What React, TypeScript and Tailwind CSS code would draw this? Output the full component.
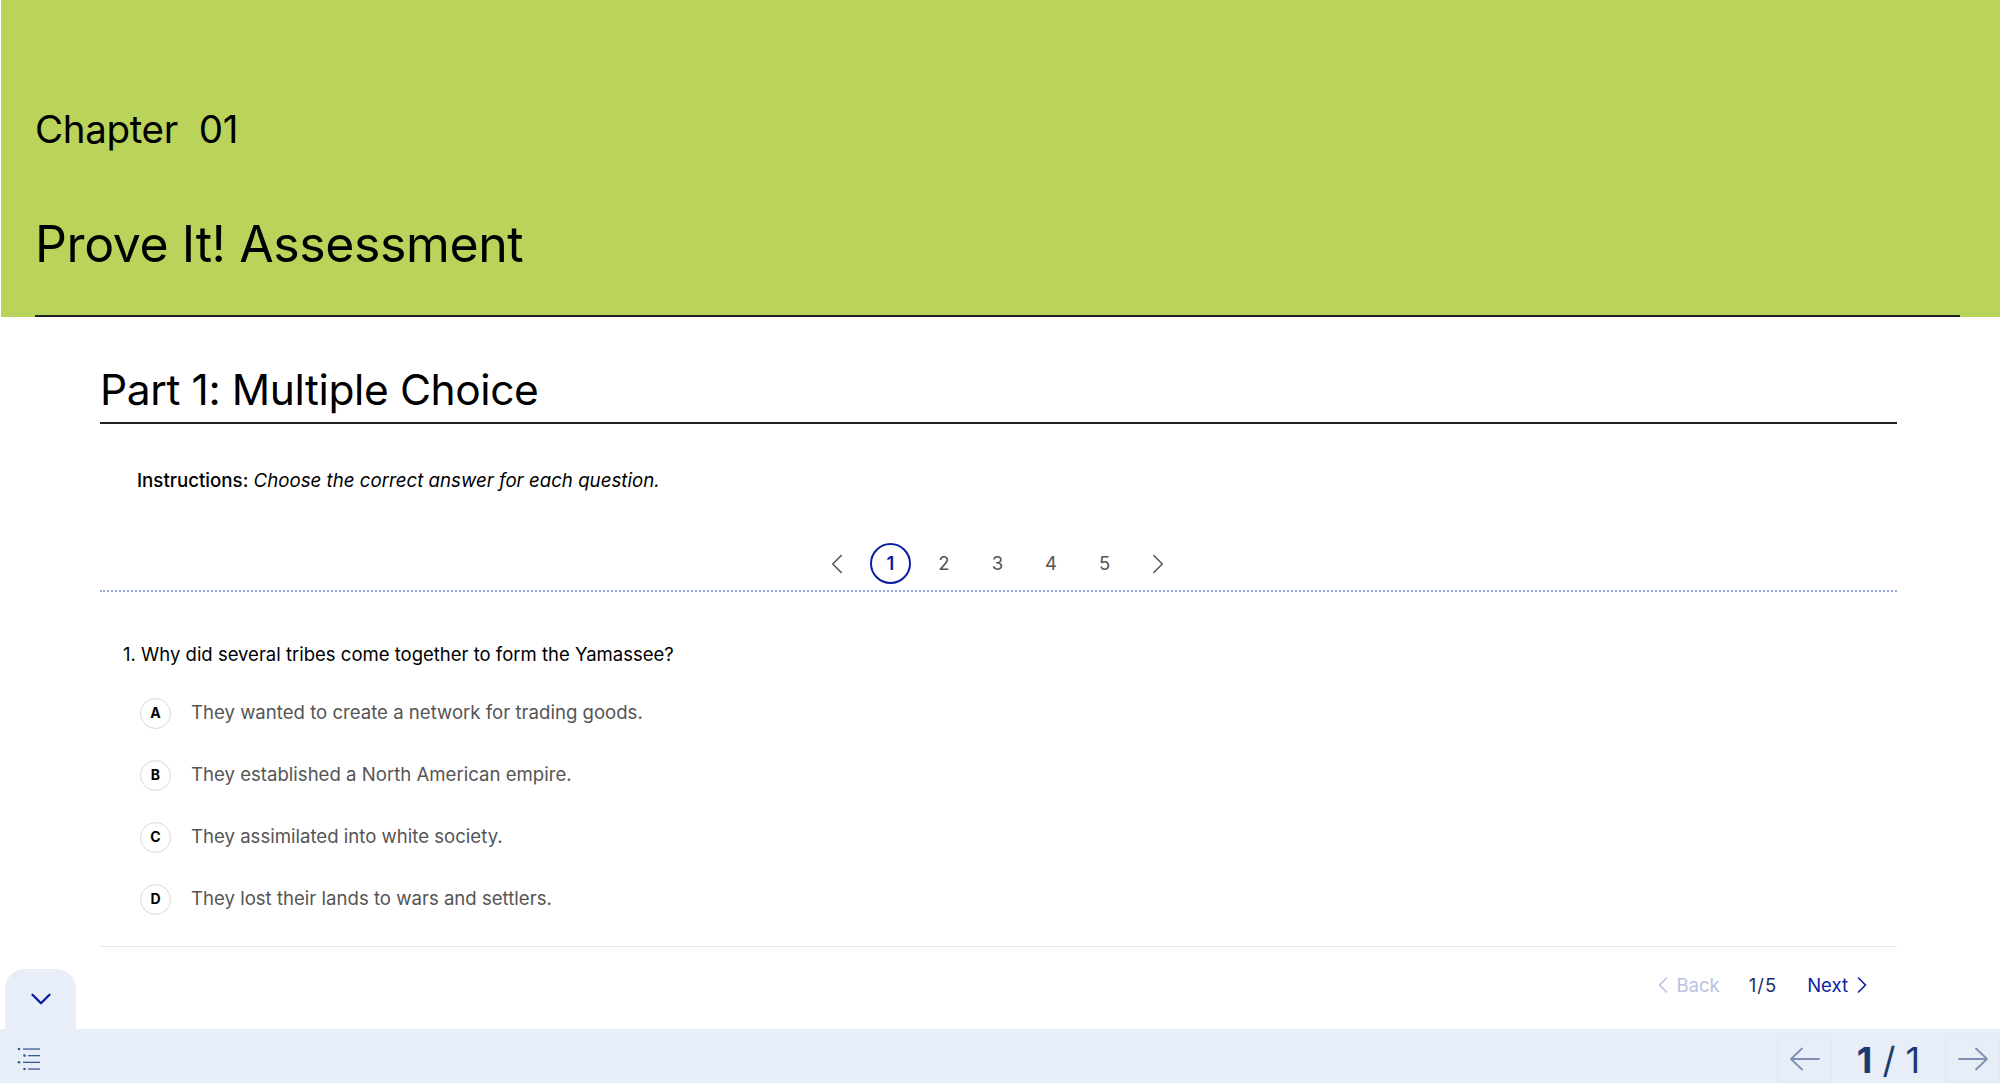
import { ChevronDown, ChevronLeft, ChevronRight } from 'lucide-react';

const options = [
  { letter: 'A', text: 'They wanted to create a network for trading goods.' },
  { letter: 'B', text: 'They established a North American empire.' },
  { letter: 'C', text: 'They assimilated into white society.' },
  { letter: 'D', text: 'They lost their lands to wars and settlers.' },
];

function OutlineIcon() {
  return (
    <svg width="24" height="30" viewBox="0 0 24 30" className="text-[#3d5a94]" fill="currentColor">
      <circle cx="2" cy="8" r="1.3" />
      <rect x="6" y="7.4" width="17" height="1.3" />
      <circle cx="7.5" cy="14.6" r="1.3" />
      <rect x="11" y="14" width="12" height="1.3" />
      <circle cx="2" cy="21.3" r="1.3" />
      <rect x="6" y="20.7" width="17" height="1.3" />
      <circle cx="7.5" cy="28" r="1.3" />
      <rect x="11" y="27.4" width="12" height="1.3" />
    </svg>
  );
}

function LongArrow({ flip }: { flip?: boolean }) {
  return (
    <svg width="30" height="24" viewBox="0 0 30 24" fill="none" stroke="currentColor" strokeWidth="1.8" strokeLinecap="round" strokeLinejoin="round" className={flip ? 'rotate-180' : ''}>
      <path d="M29 12H1M12 1.5 1 12l11 10.5" />
    </svg>
  );
}

export default function App() {
  return (
    <div className="relative flex h-screen w-full flex-col overflow-hidden bg-white font-['Inter',sans-serif] text-black">
      {/* Header */}
      <header className="ml-[1px] h-[317px] shrink-0 bg-[#b9d35b]">
        <div className="ml-[34px] mr-[40px] h-full border-b-2 border-[#222] pt-[105px]">
          <div className="text-[38.5px] leading-[48px] tracking-[-0.35px] whitespace-pre">Chapter  01</div>
          <h1 className="mt-[61px] text-[50px] leading-[60px] tracking-[-0.4px]">Prove It! Assessment</h1>
        </div>
      </header>

      {/* Content */}
      <main className="flex-1 pl-[100px] pr-[103px]">
        <div className="border-b-2 border-[#222] pt-[48px] pb-[7px]">
          <h2 className="text-[42.5px] leading-[50px] tracking-[-0.4px]">Part 1: Multiple Choice</h2>
        </div>

        <p className="mt-[43px] pl-[37px] text-[18.7px] leading-[28px]">
          <span className="font-medium">Instructions:</span> <em>Choose the correct answer for each question.</em>
        </p>

        <div className="mt-[48px] flex h-[49px] justify-center border-b-2 border-dotted border-[#9aaade] pr-[2px]">
          <div className="flex h-[41px] items-center text-[18.5px] text-[#555]">
            <button className="flex w-[53.6px] justify-center"><ChevronLeft size={34} strokeWidth={1.1} /></button>
            <div className="flex w-[53.6px] justify-center">
              <button className="flex h-[41px] w-[41px] items-center justify-center rounded-full border-2 border-[#0b1ea0] font-semibold text-[#0b1ea0]">1</button>
            </div>
            <button className="w-[53.6px]">2</button>
            <button className="w-[53.6px]">3</button>
            <button className="w-[53.6px]">4</button>
            <button className="w-[53.6px]">5</button>
            <button className="flex w-[53.6px] justify-center"><ChevronRight size={34} strokeWidth={1.1} /></button>
          </div>
        </div>

        <p className="mt-[48px] pl-[23px] text-[18.5px] leading-[28px]">1. Why did several tribes come together to form the Yamassee?</p>

        <ul className="mt-[14px] pl-[40px]">
          {options.map((o) => (
            <li key={o.letter} className="flex h-[62px] items-center gap-[20px] text-[18.6px] text-[#555]">
              <span className="flex h-[31px] w-[31px] items-center justify-center rounded-full border border-[#d9d9d9] pb-[1px] text-[14px] font-bold text-black">
                {o.letter}
              </span>
              {o.text}
            </li>
          ))}
        </ul>

        <div className="mt-[16px] flex h-[60px] items-center justify-end border-t border-[#e9e9e9] pt-[17px] pr-[21px] text-[18.5px] leading-[28px]">
          <span className="flex items-center text-[#b9c1e4]"><ChevronLeft size={28} strokeWidth={1.4} />Back</span>
          <span className="ml-[29px] tracking-[1px] text-[#1a2f66]">1/5</span>
          <span className="ml-[30px] flex items-center text-[#0b1ea0]">Next<ChevronRight size={28} strokeWidth={1.4} /></span>
        </div>
      </main>

      {/* Collapse tab */}
      <button className="absolute bottom-[55px] left-[5px] flex h-[60px] w-[71px] items-center justify-center rounded-t-[20px] bg-[#e8eef8] text-[#0b1ea0]">
        <ChevronDown size={34} strokeWidth={1.7} />
      </button>

      {/* Bottom toolbar */}
      <footer className="flex h-[55px] shrink-0 items-end justify-between border-b border-white bg-[#e8eef8] pl-[17px]">
        <div className="self-center"><OutlineIcon /></div>
        <div className="flex items-center text-[#1a3a70]">
          <button className="flex h-[49px] w-[55px] items-center justify-center rounded-[6px] border border-[#e3e9f4] text-[#7f91b2]"><LongArrow /></button>
          <span className="w-[113px] pt-[3px] text-center text-[36px] leading-[40px] whitespace-pre"><b className="font-bold">1</b> / 1</span>
          <button className="flex h-[49px] w-[55px] items-center justify-center rounded-[6px] border border-[#e3e9f4] text-[#7f91b2]"><LongArrow flip /></button>
        </div>
      </footer>
    </div>
  );
}
